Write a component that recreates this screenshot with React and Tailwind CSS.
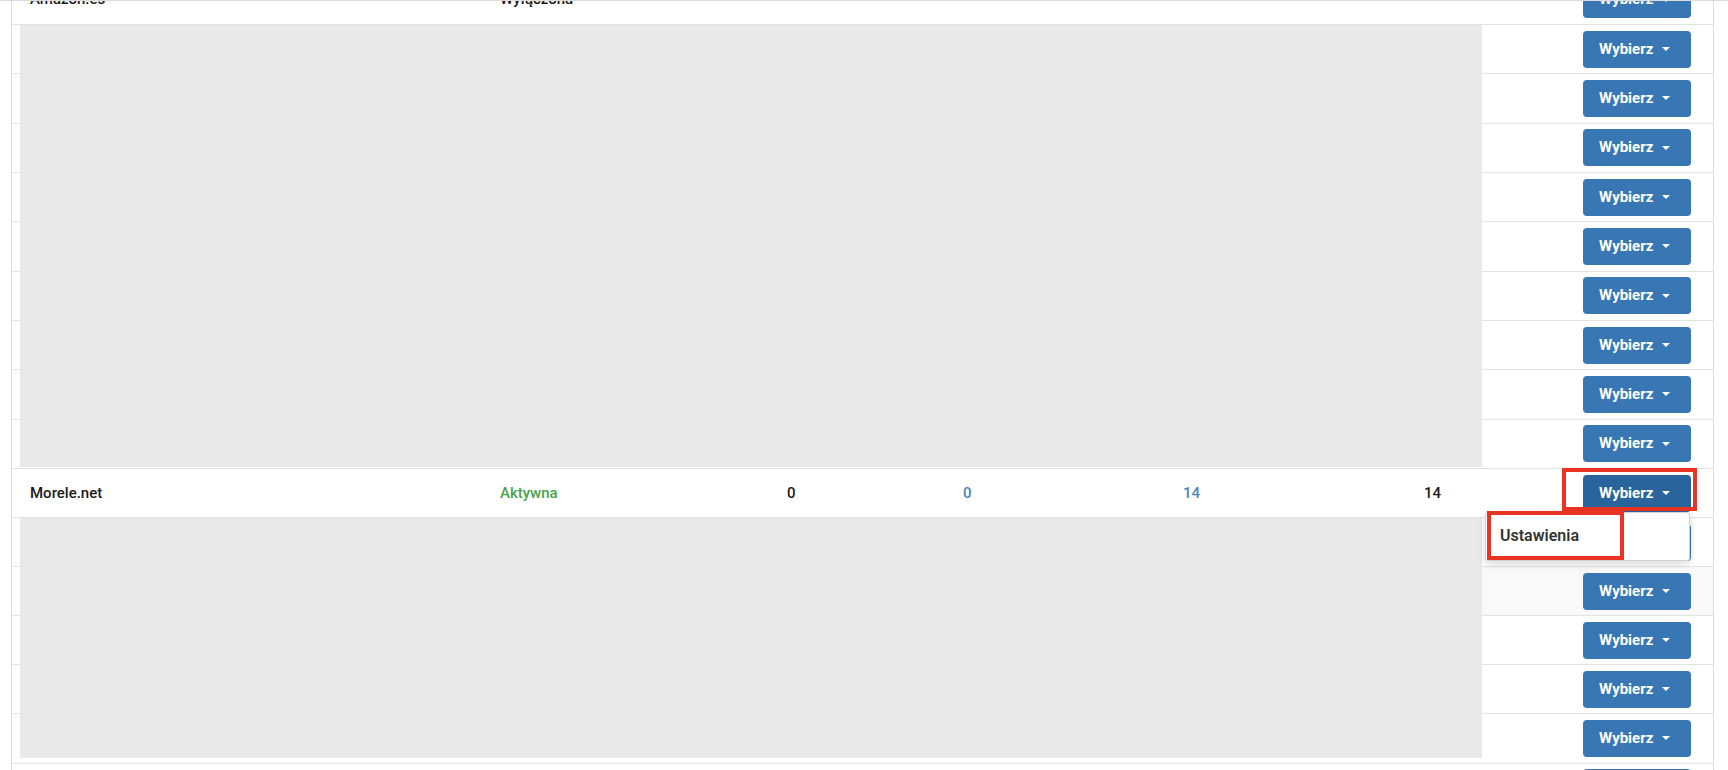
import React from 'react';

const rowBase = "flex h-[49.33px] border-t border-[#e2e2e2]";
const rowTight = "flex h-[49.1px] border-t border-[#e2e2e2]";

function ChooseButton({ active = false }) {
  return (
    <button
      type="button"
      className={`flex items-center h-[37px] w-[108px] pl-[16px] gap-[9px] rounded-[4px] text-white text-[15px] font-bold leading-none ${
        active ? 'bg-[#2a649c]' : 'bg-[#3877b3]'
      }`}
    >
      Wybierz
      <span className="w-0 h-0 border-x-[4px] border-x-transparent border-t-[4px] border-t-white" />
    </button>
  );
}

function ActionCell({ children, striped = false }) {
  return (
    <div
      className={`relative w-[231px] h-full flex items-center justify-end pr-[22px] ${
        striped ? 'bg-[#f9f9f9]' : 'bg-white'
      }`}
    >
      {children}
    </div>
  );
}

function DataCells({ name, status, statusClass, a, b, c, d }) {
  return (
    <div className="flex items-center h-full text-[15px] font-medium text-[#1a1a1a]">
      <div className="w-[488px] pl-[18px]">{name}</div>
      <div className={`w-[287px] ${statusClass}`}>{status}</div>
      <div className="w-[176px]">{a}</div>
      <div className="w-[220px] text-[#4a84c0]">{b}</div>
      <div className="w-[241px] text-[#4a84c0]">{c}</div>
      <div className="w-[58px]">{d}</div>
    </div>
  );
}

// rows hidden under the grey block only show their action button
function BlankRow({ striped, tight }) {
  return (
    <div className={tight ? rowTight : rowBase}>
      <div className="flex-1" />
      <ActionCell striped={striped}>
        <ChooseButton />
      </ActionCell>
    </div>
  );
}

export default function App() {
  return (
    <div className="w-[1728px] h-[770px] overflow-hidden bg-white border-t border-[#dcdcdc] font-['Roboto','Liberation_Sans',sans-serif]">
      <div className="ml-[11px] w-[1703px] border-x border-[#dcdcdc]">
        {/* Amazon.es row, cut by the top of the window */}
        <div className="h-[23px] overflow-hidden">
          <div className="flex h-[49.33px] -mt-[26px]">
            <div className="flex-1">
              <DataCells
                name="Amazon.es"
                status="Wyłączona"
                statusClass="text-[#1a1a1a]"
              />
            </div>
            <ActionCell>
              <ChooseButton />
            </ActionCell>
          </div>
        </div>

        {/* redacted group 1 */}
        <div className="relative">
          {Array.from({ length: 9 }).map((_, i) => (
            <BlankRow key={i} />
          ))}
          <div className="absolute left-[8px] top-px bottom-px w-[1462px] bg-[#e9e9e9]" />
        </div>

        {/* Morele.net row with open menu */}
        <div className={`${rowTight} relative z-20`}>
          <div className="flex-1">
            <DataCells
              name="Morele.net"
              status="Aktywna"
              statusClass="text-[#47a447]"
              a="0"
              b="0"
              c="14"
              d="14"
            />
          </div>
          <ActionCell>
            <ChooseButton active />
            <div className="absolute left-[80px] -top-px w-[135px] h-[43px] border-[4px] border-[#ea3323]" />
            <div className="absolute left-[3px] top-[43px] w-[205px] h-[49px] bg-white border border-[#d2d2d2] rounded-[3px] shadow-[0_3px_8px_rgba(0,0,0,0.15)] flex items-center pl-[14px] text-[16px] font-semibold text-[#333]">
              Ustawienia
              <div className="absolute left-px -top-[2px] w-[137px] h-[49px] border-[4px] border-[#ea3323]" />
            </div>
          </ActionCell>
        </div>

        {/* redacted group 2 */}
        <div className="relative">
          <BlankRow tight />
          <BlankRow tight striped />
          <BlankRow tight />
          <BlankRow tight />
          <BlankRow tight />
          <div className="absolute left-[8px] top-px bottom-[5px] w-[1462px] bg-[#e9e9e9]" />
        </div>

        <BlankRow tight />
      </div>
    </div>
  );
}
